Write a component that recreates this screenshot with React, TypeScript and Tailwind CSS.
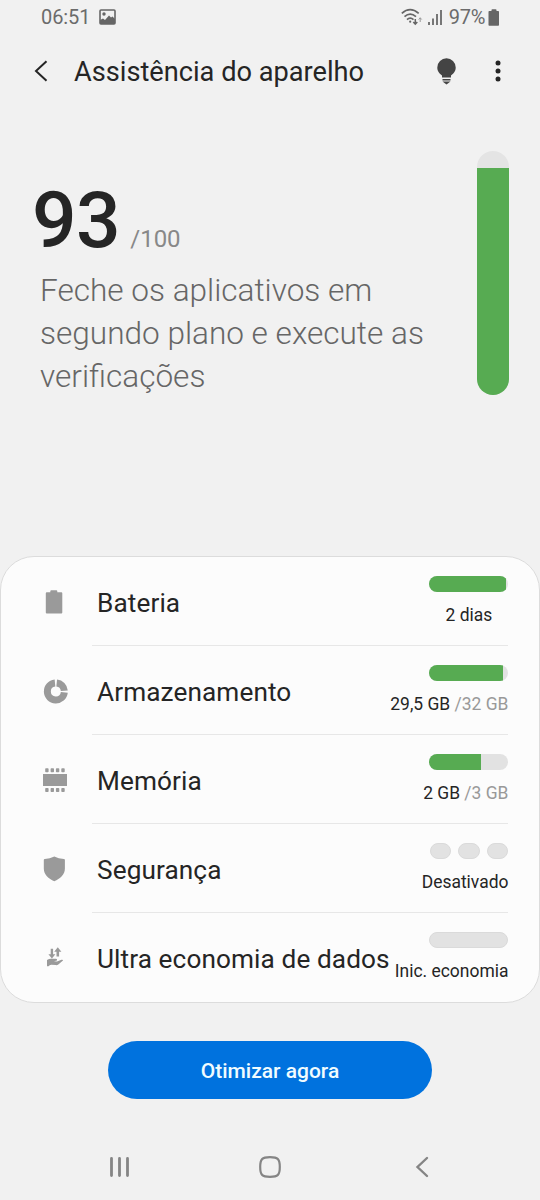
import type { ReactNode } from "react";

function BatteryIcon() {
  return (
    <svg width="28" height="28" viewBox="0 0 28 28" fill="#9a9a9a">
      <path d="M10.300 3.200q0-1 1-1h5q1 0 1 1v1h4q1 0 1 1v19.300q0 1-1 1H6.800q-1 0-1-1V5.200q0-1 1-1h3.500z" />
    </svg>
  );
}

function StorageIcon() {
  return (
    <svg width="28" height="28" viewBox="0 0 28 28" fill="none" stroke="#9a9a9a" strokeWidth="7">
      <path d="M24.300 15.400A8.500 8.500 0 1 1 15 6" />
      <path d="M16.700 6A8.500 8.500 0 0 1 24.300 13.700" />
    </svg>
  );
}

function MemoryIcon() {
  return (
    <svg width="28" height="28" viewBox="0 0 28 28" fill="#9a9a9a">
      <path d="M3 8h24v12H3z" />
      {[5.200, 10.600, 15.900, 21.300].map((x) => (
        <g key={x}>
          <rect x={x} y="2.200" width="3.400" height="4" rx="0.800" />
          <rect x={x} y="22" width="3.400" height="4" rx="0.800" />
        </g>
      ))}
    </svg>
  );
}

function ShieldIcon() {
  return (
    <svg width="28" height="28" viewBox="0 0 28 28" fill="#9a9a9a">
      <path d="M14.300 1.500Q18.500 3.700 23.900 3.900q1 0 1 1v8.600c0 6-4.800 10.400-10.600 12.700C8.600 23.900 3.800 19.500 3.800 13.500V4.900q0-1 1-1Q10 3.700 14.300 1.500z" />
    </svg>
  );
}

function DataSavingIcon() {
  return (
    <svg width="28" height="28" viewBox="0 0 28 28" fill="#9a9a9a">
      <path d="M10.700 4.800h2.400v5.500h2.300l-3.500 4.200-3.500-4.200h2.300zM16.500 12.500V7.800h-2.300l3.600-4.600 3.600 4.600h-2.300v4.700zM7 16q2-1.200 4-1.200h5q1.500.3 1 1.700l-3 .8 3 .2 4.500-1.700q1.800-.3 1.500.8l-4.700 4q-1 .7-2.500.5l-4.500-.3q-1.800 0-2.800 1.500H7z" />
    </svg>
  );
}

function Meter({ fill }: { fill: number }) {
  return (
    <div className="h-4 w-[79px] overflow-hidden rounded-full bg-[#e2e2e2]">
      <div className="h-full bg-[#57ab52]" style={{ width: fill }} />
    </div>
  );
}

type RowProps = {
  icon: ReactNode;
  label: string;
  meter: ReactNode;
  value: ReactNode;
  centered?: boolean;
  last?: boolean;
};

function Row({ icon, label, meter, value, centered, last }: RowProps) {
  return (
    <div className="flex h-[89.100px] pl-[39px]">
      <div className="flex h-full w-[52px] items-center pt-px">{icon}</div>
      <div className={`mr-[30.600px] flex flex-1 justify-between border-b pl-[5px] ${last ? "border-transparent" : "border-[#e7e7e7]"}`}>
        <span className="pt-[29.500px] text-[26.200px] leading-8 tracking-[0.100px] whitespace-nowrap">{label}</span>
        <div className="flex w-0 flex-col items-end pt-[19px]">
          {meter}
          <span className={`mt-[11px] text-[17.450px] leading-6 whitespace-nowrap ${centered ? "w-[79px] text-center" : ""}`}>{value}</span>
        </div>
      </div>
    </div>
  );
}

export default function App() {
  return (
    <div className="flex h-[1200px] w-[540px] flex-col overflow-hidden bg-[#f1f1f1] font-['Roboto',sans-serif] text-[#252525]">
      <header className="flex h-[34px] shrink-0 items-center justify-between pr-10 pl-[41px] text-xl text-[#6b6b6b]">
        <div className="flex items-center gap-[9px]">
          <span className="tracking-[-0.100px]">06:51</span>
          <svg width="17" height="16" viewBox="0 0 17 16">
            <rect x="1" y="1" width="15" height="14" rx="1" fill="none" stroke="#666" strokeWidth="1.600" />
            <circle cx="5" cy="5" r="1.700" fill="#666" />
            <path d="M1 11l3-1.500 2 1.500 4-4.500 2 2 1.500-1L16 10v5H1z" fill="#666" />
          </svg>
        </div>
        <div className="flex items-center">
          <svg width="22" height="18" viewBox="0 0 22 18" fill="none" stroke="#666" strokeWidth="1.700">
            <path d="M.8 5.300Q9 -2 17.700 5.300M3.500 8.700Q9.200 3.500 15 8.700M6 11.700q3.200-3 6.500 0" />
            <circle cx="9.200" cy="13.700" r="1.100" fill="#666" stroke="none" />
            <path d="M14.300 11v5m-2-2l2 2.200 2-2.200" strokeWidth="1.500" />
            <path d="M19.200 14V9.800m-1.500 1.700l1.500-1.700 1.500 1.700" stroke="#999" strokeWidth="1" />
          </svg>
          <svg className="ml-[5px]" width="15" height="16" viewBox="0 0 15 16" fill="#777">
            <path d="M0 13h2v3H0zM4 9.500h2V16H4zM8 5h2v11H8zM12 1h2v15h-2z" />
          </svg>
          <span className="ml-[6px] tracking-[-0.300px]">97%</span>
          <svg className="ml-[3px]" width="12" height="17" viewBox="0 0 12 17" fill="#666">
            <path d="M3.500 1q0-.8.800-.8h3.400q.8 0 .8.800v1h1.700q.8 0 .8.800v13.100q0 .8-.8.800H1.300q-.8 0-.8-.8V2.800q0-.8.8-.8h2.200z" />
          </svg>
        </div>
      </header>

      <div className="flex h-[74px] shrink-0 items-center pr-[39px] pl-[34px]">
        <svg width="14" height="22" viewBox="0 0 14 22" fill="none" stroke="#252525" strokeWidth="2">
          <path d="M12.500 1.300L2 11l10.500 9.700" />
        </svg>
        <h1 className="ml-[26px] pt-[3px] text-[27.200px] font-normal whitespace-nowrap">Assistência do aparelho</h1>
        <svg className="ml-auto" width="19" height="27" viewBox="0 0 19 27" fill="#444">
          <path d="M9.500.3a9.200 9.200 0 0 1 9.200 9.200c0 4-2.300 6-4.700 8v2H5v-2C2.600 15.500.3 13.500.3 9.500A9.200 9.200 0 0 1 9.500.3zM5.500 21h8v1.500h-8zM5.500 23.600h8L9.500 26.500z" />
        </svg>
        <svg className="ml-[39px]" width="6" height="22" viewBox="0 0 6 22" fill="#252525">
          <circle cx="3" cy="2.900" r="2.500" />
          <circle cx="3" cy="10.900" r="2.500" />
          <circle cx="3" cy="18.900" r="2.500" />
        </svg>
      </div>

      <section className="flex h-[448px] shrink-0 justify-between pt-[43px] pr-[31px] pl-[32px]">
        <div className="pt-[26px]">
          <div className="flex items-baseline">
            <span className="text-[78.500px] leading-[86px] font-medium tracking-[-0.500px]">93</span>
            <span className="ml-[10px] text-2xl text-[#888]">/100</span>
          </div>
          <p className="mt-[6px] ml-[8px] w-[400px] text-[31.550px] leading-[43px] font-light text-[#666]">
            Feche os aplicativos em segundo plano e execute as verificações
          </p>
        </div>
        <div className="flex h-[244px] w-8 flex-col justify-end overflow-hidden rounded-full bg-[#e4e4e4]">
          <div className="h-[227px] bg-[#57ab52]" />
        </div>
      </section>

      <section className="h-[447px] shrink-0 overflow-hidden rounded-[34px] border border-[#dcdcdc] bg-[#fcfcfc]">
        <Row icon={<BatteryIcon />} label="Bateria" meter={<Meter fill={77} />} value="2 dias" centered />
        <Row
          icon={<StorageIcon />}
          label="Armazenamento"
          meter={<Meter fill={74} />}
          value={<>29,5 GB <span className="text-[#999]">/32 GB</span></>}
        />
        <Row
          icon={<MemoryIcon />}
          label="Memória"
          meter={<Meter fill={52} />}
          value={<>2 GB <span className="text-[#999]">/3 GB</span></>}
        />
        <Row
          icon={<ShieldIcon />}
          label="Segurança"
          meter={
            <div className="flex h-4 gap-[7px]">
              {[0, 1, 2].map((i) => (
                <div key={i} className="h-4 w-[21.600px] rounded-full border border-[#dadada] bg-[#e2e2e2]" />
              ))}
            </div>
          }
          value="Desativado"
        />
        <Row
          icon={<DataSavingIcon />}
          label="Ultra economia de dados"
          meter={<div className="h-4 w-[79px] rounded-full border border-[#dadada] bg-[#e2e2e2]" />}
          value="Inic. economia"
          last
        />
      </section>

      <div className="flex shrink-0 justify-center pt-[38px]">
        <button className="h-[58px] w-[324px] rounded-full bg-[#0072de] pt-[3px] text-[21px] font-medium text-[#f0fcff]">Otimizar agora</button>
      </div>

      <nav className="mt-[57px] flex items-center pl-[109px]">
        <svg width="21" height="22" viewBox="0 0 21 22" stroke="#858585" strokeWidth="2.800" strokeLinecap="round">
          <path d="M2.500 2.500v17M10.500 2.500v17M18.500 2.500v17" />
        </svg>
        <svg className="ml-[129px]" width="22" height="22" viewBox="0 0 22 22" fill="none" stroke="#858585" strokeWidth="2.200">
          <path d="M11 1.200C3 1.200 1.200 3 1.200 11S3 20.800 11 20.800 20.800 19 20.800 11 19 1.200 11 1.200z" />
        </svg>
        <svg className="ml-[134px]" width="14" height="22" viewBox="0 0 14 22" fill="none" stroke="#858585" strokeWidth="2.400" strokeLinecap="round">
          <path d="M12 2L2.500 11l9.500 9" />
        </svg>
      </nav>
    </div>
  );
}
